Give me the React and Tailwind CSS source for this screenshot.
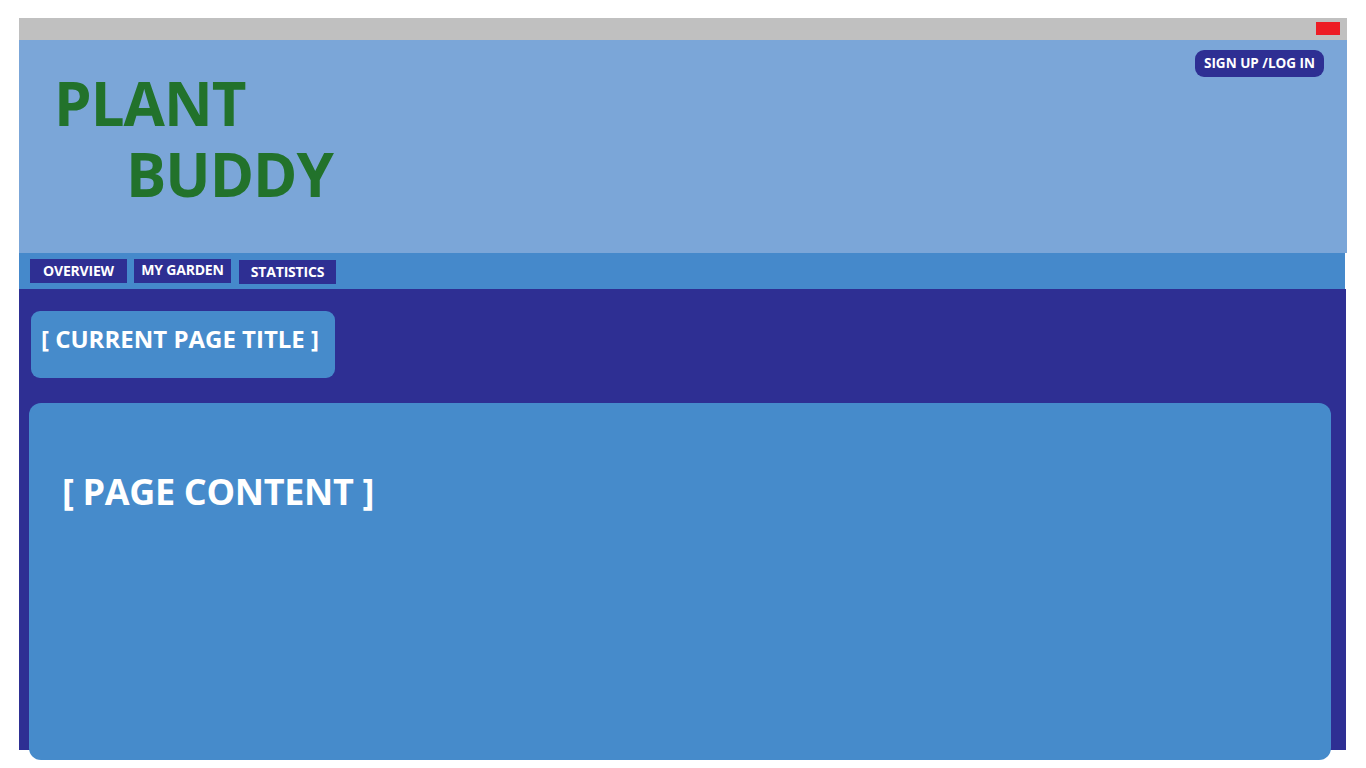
import React from "react";

const tabs = [
  { label: "OVERVIEW", cls: "pb-[2px]" },
  { label: "MY GARDEN", cls: "pb-[4px]" },
  { label: "STATISTICS", cls: "mt-[1px] ml-[1px] pb-[2px]" },
];

const App = () => {
  return (
    <div
      className="min-h-screen bg-white pt-[18px] pl-[19px]"
      style={{ fontFamily: '"Open Sans", "Noto Sans", sans-serif' }}
    >
      <div className="w-[1328px]">
        {/* Window bar */}
        <div className="h-[22px] bg-[#c0c0c0] flex justify-end pt-[4px] pr-[7px]">
          <div className="w-[24px] h-[13px] bg-[#ed1c24]" />
        </div>

        {/* Header */}
        <div className="h-[213px] bg-[#7ba6d8] flex justify-between">
          <div className="pl-[35px] pt-[28px] text-[#22722b] font-bold text-[60px] leading-[71px] tracking-[-1px]">
            <div>PLANT</div>
            <div className="pl-[72px]">BUDDY</div>
          </div>
          <div className="pt-[10px] pr-[23px]">
            <button className="h-[27px] px-[9px] rounded-[9px] bg-[#2e2f93] text-white font-bold text-[13.5px] leading-none">
              SIGN UP /LOG IN
            </button>
          </div>
        </div>

        {/* Nav */}
        <div className="h-[36px] bg-[#4589cb] mr-[2px] flex items-start gap-[7px] pl-[11px] pt-[6px]">
          {tabs.map((t) => (
            <div
              key={t.label}
              className={`w-[97px] h-[24px] bg-[#2e2f93] text-white font-bold text-[14px] flex justify-center items-center tracking-[-0.2px] ${t.cls}`}
            >
              {t.label}
            </div>
          ))}
        </div>

        {/* Main */}
        <div className="h-[461px] bg-[#2e2f93] mr-[1px] pt-[22px] pl-[10px]">
          <div className="ml-[2px] w-[304px] h-[67px] rounded-[9px] bg-[#468bcb] pl-[10px] pt-[13px]">
            <span className="text-white font-bold text-[24px] leading-[30px]">
              [ CURRENT PAGE TITLE ]
            </span>
          </div>
          <div className="mt-[25px] w-[1302px] h-[357px] rounded-[12px] bg-[#468bcb] pl-[33px] pt-[66px]">
            <h1 className="text-white font-bold text-[36px] leading-[46px] tracking-[-0.35px]">
              [ PAGE CONTENT ]
            </h1>
          </div>
        </div>
      </div>
    </div>
  );
};

export default App;
